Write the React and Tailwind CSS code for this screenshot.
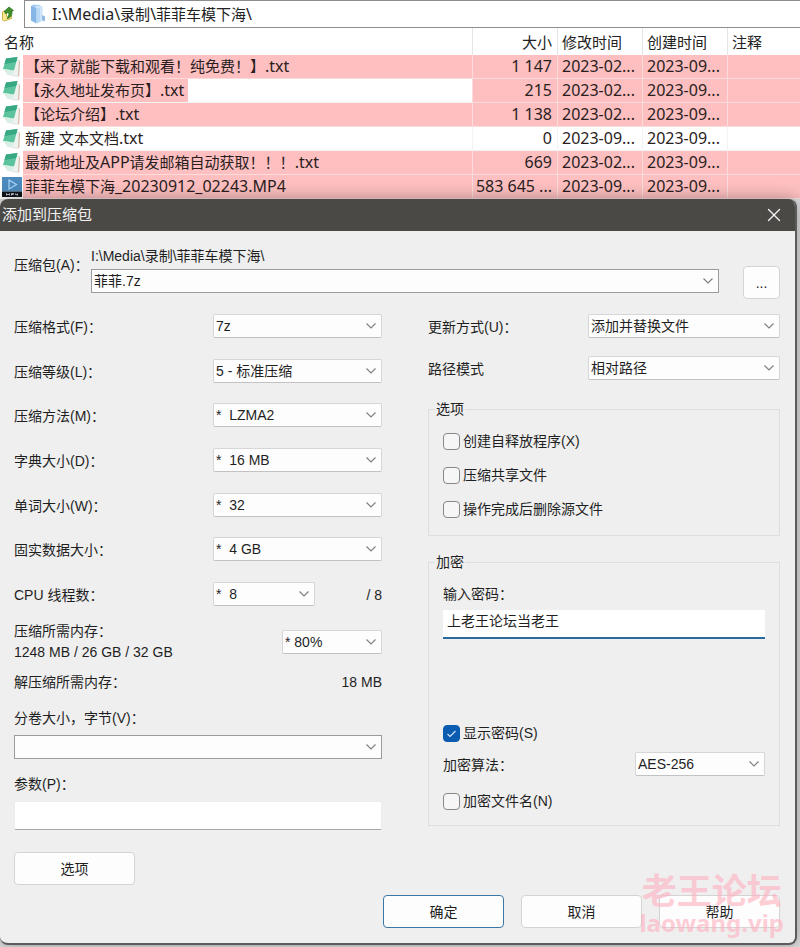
import { useState } from 'react'
import { X } from 'lucide-react'

const FILES = [
  { name: '【来了就能下载和观看！纯免费！】.txt', size: '1 147', modified: '2023-02...', created: '2023-09...', icon: 'txt', tone: 'full' },
  { name: '【永久地址发布页】.txt', size: '215', modified: '2023-02...', created: '2023-09...', icon: 'txt', tone: 'text' },
  { name: '【论坛介绍】.txt', size: '1 138', modified: '2023-02...', created: '2023-09...', icon: 'txt', tone: 'full' },
  { name: '新建 文本文档.txt', size: '0', modified: '2023-09...', created: '2023-09...', icon: 'txt', tone: 'none' },
  { name: '最新地址及APP请发邮箱自动获取！！！.txt', size: '669', modified: '2023-02...', created: '2023-09...', icon: 'txt', tone: 'full' },
  { name: '菲菲车模下海_20230912_02243.MP4', size: '583 645 ...', modified: '2023-09...', created: '2023-09...', icon: 'mp4', tone: 'full' },
]

const LEFT_FIELDS = [
  { id: 'format', label: '压缩格式(F)：', value: '7z' },
  { id: 'level', label: '压缩等级(L)：', value: '5 - 标准压缩' },
  { id: 'method', label: '压缩方法(M)：', value: '*\u00a0 LZMA2' },
  { id: 'dict', label: '字典大小(D)：', value: '*\u00a0 16 MB' },
  { id: 'word', label: '单词大小(W)：', value: '*\u00a0 32' },
  { id: 'solid', label: '固实数据大小：', value: '*\u00a0 4 GB' },
]

// Latin runs are set one pixel larger than the Chinese ones.
function Mixed({ text }) {
  return text.split(/([\x21-\x7e]+)/).map((part, i) =>
    i % 2 ? (
      <span key={i} className="text-[16px]">
        {part}
      </span>
    ) : (
      part
    ),
  )
}

function UpIcon() {
  return (
    <svg viewBox="0 0 16 18" className="mr-2 h-[18px] w-4">
      <path d="M2.500 7l4-1.500v6l5-1v3l-7 2.500-2-1z" fill="#f5e88e" stroke="#cdb548" strokeWidth="1" />
      <path d="M5 8.500V6.500H4L9 2l4.500 3.500-1.500.5c.3 4.500-1.500 7-5 7.500 1.500-1.500 2-3.500 1.800-6z" fill="#3f8f2c" stroke="#256d1c" strokeWidth=".7" />
    </svg>
  )
}

function FolderIcon() {
  return (
    <svg viewBox="0 0 18 22" className="h-[22px] w-[18px]">
      <path d="M2 3l2-1.500 7 .5v14l-3 4-6-2.500z" fill="#a9cdf0" />
      <path d="M6 3.500l6-1 1.500 1V18L8 20.500l-2-2z" fill="#cfe4f8" />
      <path d="M2 3l5.500 2v15.500L2 17.500z" fill="#86b6e6" />
      <path d="M7.500 6L11 4.500V18l-3.500 2.500z" fill="#b9d8f5" />
      <path d="M13 12l3 1.500v5L13 17z" fill="#8fb9e2" />
    </svg>
  )
}

function FileIcon({ kind }) {
  if (kind === 'mp4') {
    return (
      <svg viewBox="0 0 20 20" className="h-5 w-5">
        <rect width="20" height="14.500" fill="#4c8abd" />
        <rect y="14.500" width="20" height="5.500" fill="#10151b" />
        <path d="M7 3l7.500 4.500L7 12z" fill="none" stroke="#a9d4f5" strokeWidth="1.200" />
        <path d="M4.500 18.500v-2L6 18l1.500-1.500v2M9.500 18.500v-2h2v1h-2M13.500 16.500v1.200H16M15.300 16.500v2" fill="none" stroke="#dfe5ea" strokeWidth=".8" />
      </svg>
    )
  }
  return (
    <svg viewBox="0 0 20 22" className="h-[22px] w-5">
      <path d="M15 3l2.500 1.500-1 15-2 1L5 18z" fill="#eef3ef" stroke="#cfd5d0" strokeWidth=".6" />
      <path d="M17 4.500l1 .5-.8 15-1.200.5z" fill="#d8b7a6" />
      <path d="M4 2.500L15.500 1l-3.500 13.500L1 13z" fill="#5cc39c" />
      <path d="M4 2.500L15.500 1l-1.300 5L2.500 8z" fill="#38a883" />
      <path d="M1 13l11 1.500-1 4-6.500-1.500z" fill="#d5efe4" />
    </svg>
  )
}

function Select({ id, value, className, strong }) {
  return (
    <div className={`relative h-6 ${className}`}>
      <select
        id={id}
        defaultValue={value}
        className={`block h-full w-full appearance-none border bg-[#fdfdfd] pr-7 pl-0.5 leading-5 outline-none ${
          strong ? 'border-[#9b9b9b]' : 'rounded-[2px] border-[#d6d6d6] border-b-[#c2c2c2]'
        }`}
      >
        <option value={value}>{value}</option>
      </select>
      <svg viewBox="0 0 12 8" className="pointer-events-none absolute top-2 right-[5px] h-2 w-3">
        <path d="M1.500 1.500L6 6l4.500-4.500" fill="none" stroke="#808080" strokeWidth="1.200" />
      </svg>
    </div>
  )
}

function Check({ label, defaultChecked = false }) {
  const [on, setOn] = useState(defaultChecked)
  return (
    <label className="flex h-5 items-center gap-[3px]">
      <span className="relative h-[17px] w-[17px]">
        <input
          type="checkbox"
          checked={on}
          onChange={(e) => setOn(e.target.checked)}
          className="block h-full w-full appearance-none rounded-[4px] border border-[#888] bg-[#f6f6f6] checked:border-[#0a5cb0] checked:bg-[#0a5cb0]"
        />
        {on && (
          <svg viewBox="0 0 17 17" className="pointer-events-none absolute inset-0">
            <path d="M4.500 9l2.500 2.500 5.500-5.500" fill="none" stroke="#d8e8f8" strokeWidth="1.100" />
          </svg>
        )}
      </span>
      {label}
    </label>
  )
}

function Button({ children, primary, className = 'w-[121px]' }) {
  return (
    <button
      type="button"
      className={`h-[33px] rounded-[4px] border bg-[#fdfdfd] ${className} ${
        primary ? 'border-[#3a78a8]' : 'border-[#d4d4d4]'
      }`}
    >
      {children}
    </button>
  )
}

function FileList() {
  return (
    <table className="w-full table-fixed border-separate border-spacing-0 text-[15px] leading-[23px] text-[#2a1d1d]">
      <colgroup>
        <col className="w-[23px]" />
        <col />
        <col className="w-[85px]" />
        <col className="w-[85px]" />
        <col className="w-[85px]" />
        <col className="w-[73px]" />
      </colgroup>
      <thead>
        <tr className="h-[27px] text-left text-[#222] [&>th]:p-0 [&>th]:pt-0.5 [&>th]:font-normal">
          <th colSpan={2}>
            <span className="pl-1">名称</span>
          </th>
          <th className="border-l border-[#e5e5e5] text-right">
            <span className="pr-[5px]">大小</span>
          </th>
          <th className="border-l border-[#e5e5e5]">
            <span className="pl-1">修改时间</span>
          </th>
          <th className="border-l border-[#e5e5e5]">
            <span className="pl-1">创建时间</span>
          </th>
          <th className="border-l border-[#e5e5e5]">
            <span className="pl-1">注释</span>
          </th>
        </tr>
      </thead>
      <tbody>
        {FILES.map((file) => {
          const cell = file.tone === 'none' ? 'border-[#f3f3f3]' : 'border-[#fbdcdc] bg-[#fdbfc0]'
          return (
            <tr key={file.name} className="h-6 whitespace-nowrap">
              <td className="p-0 pl-[2px]">
                <FileIcon kind={file.icon} />
              </td>
              <td className={`border-b p-0 ${file.tone === 'full' ? 'border-[#fbdcdc] bg-[#fdbfc0]' : 'border-[#f3f3f3]'}`}>
                <span className={`block h-[23px] w-fit pr-1 pl-0.5 ${file.tone === 'text' ? 'bg-[#fdbfc0]' : ''}`}>
                  <Mixed text={file.name} />
                </span>
              </td>
              <td className={`border-b border-l p-0 pr-[5px] text-right text-[16px] ${cell}`}>{file.size}</td>
              <td className={`border-b border-l p-0 pl-1 text-[16px] ${cell}`}>{file.modified}</td>
              <td className={`border-b border-l p-0 pl-1 text-[16px] ${cell}`}>{file.created}</td>
              <td className={`border-b border-l p-0 ${cell}`} />
            </tr>
          )
        })}
      </tbody>
    </table>
  )
}

function LeftColumn() {
  return (
    <div>
      <div className="flex h-[292px] flex-col justify-between">
        {LEFT_FIELDS.map((f) => (
          <div key={f.id} className="flex items-center justify-between">
            <label htmlFor={f.id} className="pt-0.5">
              {f.label}
            </label>
            <Select id={f.id} value={f.value} className="w-[169px]" />
          </div>
        ))}
        <div className="flex items-center">
          <label htmlFor="threads" className="flex-1 pt-0.5">
            CPU 线程数：
          </label>
          <Select id="threads" value={'*\u00a0 8'} className="w-[102px]" />
          <span className="w-[67px] pt-0.5 text-right">/ 8</span>
        </div>
      </div>

      <div className="mt-[15px] flex items-center justify-between">
        <label htmlFor="memory" className="leading-[21px]">
          压缩所需内存：
          <br />
          1248 MB / 26 GB / 32 GB
        </label>
        <Select id="memory" value="* 80%" className="w-[100px]" />
      </div>
      <div className="mt-[9px] flex justify-between">
        <span>解压缩所需内存：</span>
        <span>18 MB</span>
      </div>

      <label htmlFor="volume" className="mt-4 block">
        分卷大小，字节(V)：
      </label>
      <Select id="volume" value="" strong className="mt-[7px] w-full" />
      <label htmlFor="params" className="mt-[15px] block">
        参数(P)：
      </label>
      <input
        id="params"
        className="mt-[7px] block h-[29px] w-full rounded-[2px] border border-[#ececec] border-b-[#a8a8a8] bg-white px-1 outline-none"
      />
      <Button className="mt-[22px] block w-[121px]">选项</Button>
    </div>
  )
}

function RightColumn() {
  return (
    <div>
      <div className="flex items-center justify-between">
        <label htmlFor="update" className="pt-0.5">
          更新方式(U)：
        </label>
        <Select id="update" value="添加并替换文件" className="w-[192px]" />
      </div>
      <div className="mt-[18px] flex items-center justify-between">
        <label htmlFor="paths" className="pt-0.5">
          路径模式
        </label>
        <Select id="paths" value="相对路径" className="w-[192px]" />
      </div>

      <fieldset className="mt-[19px] border border-[#dedede] px-[14px] pt-3 pb-4">
        <legend className="-ml-2 px-px">选项</legend>
        <div className="flex flex-col gap-[14px]">
          <Check label="创建自释放程序(X)" />
          <Check label="压缩共享文件" />
          <Check label="操作完成后删除源文件" />
        </div>
      </fieldset>

      <fieldset className="mt-4 border border-[#dedede] px-[14px] pt-3 pb-[14px]">
        <legend className="-ml-2 px-px">加密</legend>
        <label htmlFor="password" className="block">
          输入密码：
        </label>
        <input
          id="password"
          defaultValue="上老王论坛当老王"
          className="mt-1.5 block h-[29px] w-full border-b-2 border-[#2c6a9c] bg-white px-1 pb-[7px] outline-none"
        />
        <div className="mt-[84px]">
          <Check label="显示密码(S)" defaultChecked />
        </div>
        <div className="mt-[9px] flex items-center justify-between">
          <label htmlFor="cipher" className="pt-0.5">
            加密算法：
          </label>
          <Select id="cipher" value="AES-256" className="w-[130px]" />
        </div>
        <div className="mt-[15px]">
          <Check label="加密文件名(N)" />
        </div>
      </fieldset>
    </div>
  )
}

export default function App() {
  return (
    <div className="bg-[#dedede] pb-0.5 font-['Noto_Sans','Noto_Sans_CJK_SC',sans-serif]">
      <div className="bg-white">
        <div className="flex h-7 items-center">
          <div className="flex w-6 justify-center">
            <UpIcon />
          </div>
          <div className="flex h-full flex-1 items-center gap-[5px] border-y border-l border-[#8c8c8c] pl-1 text-[15px] text-[#222]">
            <FolderIcon />
            <span>
              <Mixed text="I:\Media\录制\菲菲车模下海\" />
            </span>
          </div>
        </div>
        <FileList />
      </div>

      <div className="relative mr-[3px] overflow-hidden rounded-[8px] border-r-2 border-b-2 border-[#5c5c5c] bg-[#efefef] font-['Liberation_Sans','Noto_Sans_CJK_SC',sans-serif] text-[14px] leading-5 text-[#1f1f1f] shadow-[0_0_16px_rgba(0,0,0,0.35)]">
        <div className="flex h-8 items-center justify-between bg-[#4b4946] pr-[10px] pl-[2px] text-[15px] text-[#f2f2f2]">
          <h1>添加到压缩包</h1>
          <button type="button" aria-label="关闭">
            <X className="h-[22px] w-[22px]" strokeWidth={1.5} />
          </button>
        </div>

        <form className="pt-[15px] pr-[15px] pb-[15px] pl-[14px]">
          <div className="flex items-start">
            <label htmlFor="archive" className="mt-[9px] w-[77px]">
              压缩包(A)：
            </label>
            <div className="flex-1">
              <div>I:\Media\录制\菲菲车模下海\</div>
              <Select id="archive" value="菲菲.7z" strong className="mt-[3px] w-full" />
            </div>
            <Button className="mt-5 ml-6 w-[37px]">...</Button>
          </div>

          <div className="mt-[15px] grid grid-cols-[368fr_352fr] gap-x-[46px]">
            <LeftColumn />
            <RightColumn />
          </div>

          <div className="mt-[10px] flex justify-end gap-[17px]">
            <Button primary>确定</Button>
            <Button>取消</Button>
            <Button>帮助</Button>
          </div>
        </form>

        <div className="pointer-events-none absolute right-[11px] bottom-1 flex flex-col items-center font-bold text-[#ffb0bf] opacity-60">
          <span className="font-['Noto_Sans_CJK_SC',sans-serif] text-[35px] leading-9">老王论坛</span>
          <span className="font-['Noto_Sans',sans-serif] text-[24px] leading-8">laowang.vip</span>
        </div>
      </div>
    </div>
  )
}
